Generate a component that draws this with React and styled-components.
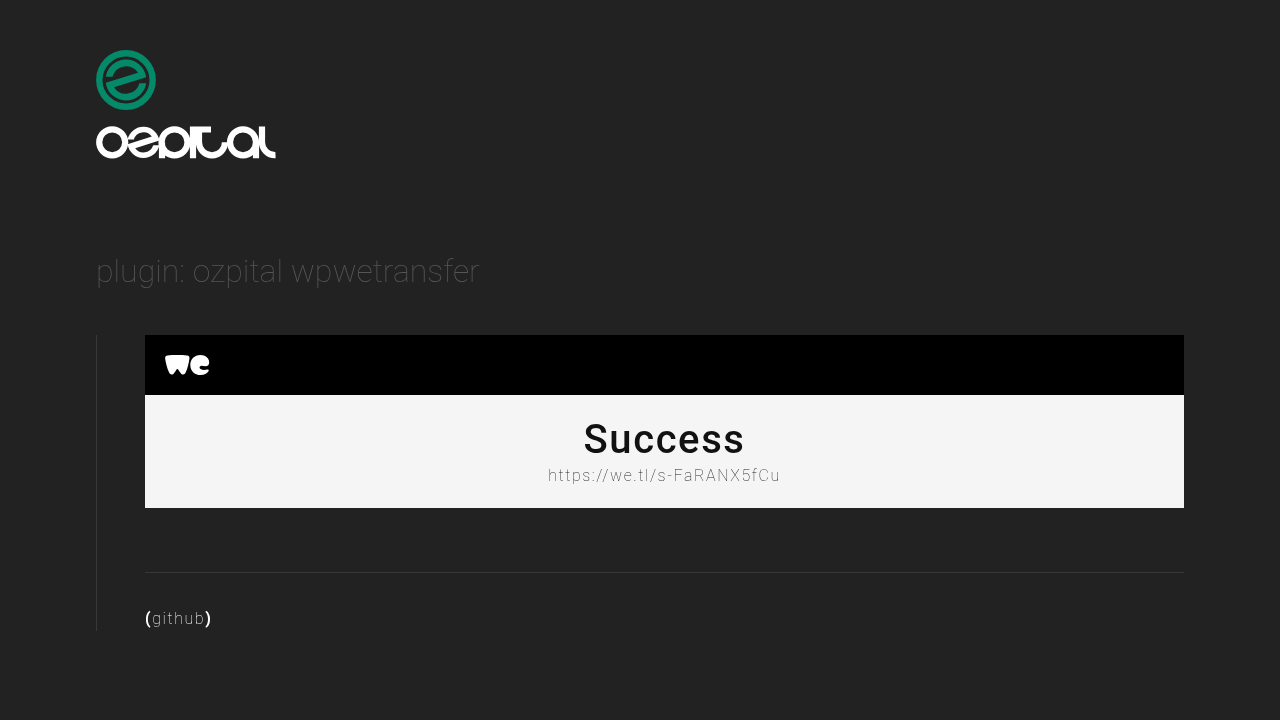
import React from "react";
import styled, { createGlobalStyle } from "styled-components";

const GlobalStyle = createGlobalStyle`
  * { box-sizing: border-box; }
  body {
    margin: 0;
    background: #222;
    color: #fff;
    font-family: Roboto, "Liberation Sans", sans-serif;
    font-size: 16px;
    line-height: 24px;
    letter-spacing: 0.1em;
    font-weight: 100;
    -webkit-font-smoothing: antialiased;
  }
`;

const Page = styled.div`
  padding: 50px 96px 88px;
  will-change: opacity;
`;

const Brand = styled.header`
  display: flex;
  flex-direction: column;
  align-items: flex-start;
`;

const BrandLogo = styled.svg`
  display: block;
  width: 180px;
  height: 109px;
`;

const PageTitle = styled.h1`
  margin: 92px 0 44px;
  color: #555;
  font-size: 32px;
  line-height: 40px;
  font-weight: 100;
  letter-spacing: 0;
`;

const Content = styled.main`
  padding-left: 48px;
  border-left: 1px solid #383838;
`;

const Transfer = styled.section`
  background: #f5f5f5;
`;

const TransferBar = styled.div`
  display: flex;
  align-items: center;
  height: 60px;
  padding: 0 20px;
  background: #000;
`;

const WeLogo = styled.svg`
  display: block;
  width: 45px;
  height: 20px;
`;

const TransferBody = styled.div`
  padding: 21px 20px 20px;
  text-align: center;
`;

const Status = styled.h2`
  margin: 0;
  color: #111;
  font-size: 40px;
  line-height: 48px;
  font-weight: 500;
`;

const TransferLink = styled.a`
  display: block;
  color: #222;
  text-decoration: none;
`;

const Footer = styled.footer`
  margin-top: 64px;
  padding-top: 34px;
  border-top: 1px solid #383838;
`;

const FooterLink = styled.a`
  color: #fff;
  text-decoration: none;

  &::before,
  &::after {
    font-weight: 700;
  }
  &::before { content: "("; }
  &::after { content: ")"; }
`;

export default function App() {
  return (
    <Page>
      <GlobalStyle />
      <Brand>
        <BrandLogo viewBox="0 0 180 109" role="img" aria-label="ozpital">
          <circle cx="30" cy="30" r="26.700" fill="none" stroke="#048a68" strokeWidth="6.400" />
          <path fill="#048a68" d="M9.800 26.700A20.400 20.400 0 0 1 50.200 27.300L18 37.200A14 14 0 0 0 43.400 33.300H50.200A20.400 20.400 0 0 1 9.800 32.700L42 22.800A14 14 0 0 0 16.600 26.700Z" />
          <g fill="none" stroke="#fff" strokeWidth="6.200">
            <circle cx="16.200" cy="92.300" r="13" />
            <circle cx="78.500" cy="92.300" r="13" />
            <path d="M66 92.300V108.300M97 108.300V76.500M94 79.500H115M103 79.500V92.300A13 13 0 0 0 129 92.300" />
            <circle cx="147" cy="92.300" r="13" />
            <path d="M160 92.300V108.300M166 76.500V92A13 13 0 0 0 179.500 105.200" />
          </g>
          <path fill="#fff" d="M31.600 89.500A16.200 16.200 0 0 1 63.400 90.500L39.200 98.200A10.200 10.200 0 0 0 57.200 95.300H63.400A16.200 16.200 0 0 1 31.600 94.300L55.800 86.500A10.200 10.200 0 0 0 37.800 89.500Z" />
        </BrandLogo>
      </Brand>
      <PageTitle>plugin: ozpital wpwetransfer</PageTitle>
      <Content>
        <Transfer>
          <TransferBar>
            <WeLogo viewBox="0 0 45 20" role="img" aria-label="WeTransfer">
              <path fill="#fff" d="M2.500 0.500C8 -0.100 16 -0.100 22.200 0.500C24 0.700 24.700 1.700 24.400 3.700C23.800 8 22.500 13.500 20.800 17.300C19.800 19.500 17.800 20.300 16.200 18.700C15 17.500 14.200 16 13.500 14.900C12.700 13.700 11.900 13.700 11.200 14.900C10.500 16 9.800 17.500 8.600 18.700C7 20.300 5 19.500 4 17.300C2.200 13.500 0.800 8 0.200 3.700C-0.100 1.700 0.700 0.700 2.500 0.500Z" />
              <path fill="#fff" d="M35.300 0C40.800 0 44.200 3.400 44.200 7.300C44.200 9.800 42.900 11.300 40.400 11.300C38.700 11.300 37.300 10.700 35.800 10.900C34.200 11.200 34.200 13 35.500 14C37.600 15.500 40.100 15.200 42 14.600C43.600 14.100 44.200 15 43.500 16.300C42.200 18.700 39.100 20 35.600 20C29.500 20 25.300 15.800 25.300 9.900C25.300 4.200 29.500 0 35.300 0Z" />
            </WeLogo>
          </TransferBar>
          <TransferBody>
            <Status>Success</Status>
            <TransferLink href="https://we.tl/s-FaRANX5fCu">https://we.tl/s-FaRANX5fCu</TransferLink>
          </TransferBody>
        </Transfer>
        <Footer>
          <FooterLink href="https://github.com">github</FooterLink>
        </Footer>
      </Content>
    </Page>
  );
}
